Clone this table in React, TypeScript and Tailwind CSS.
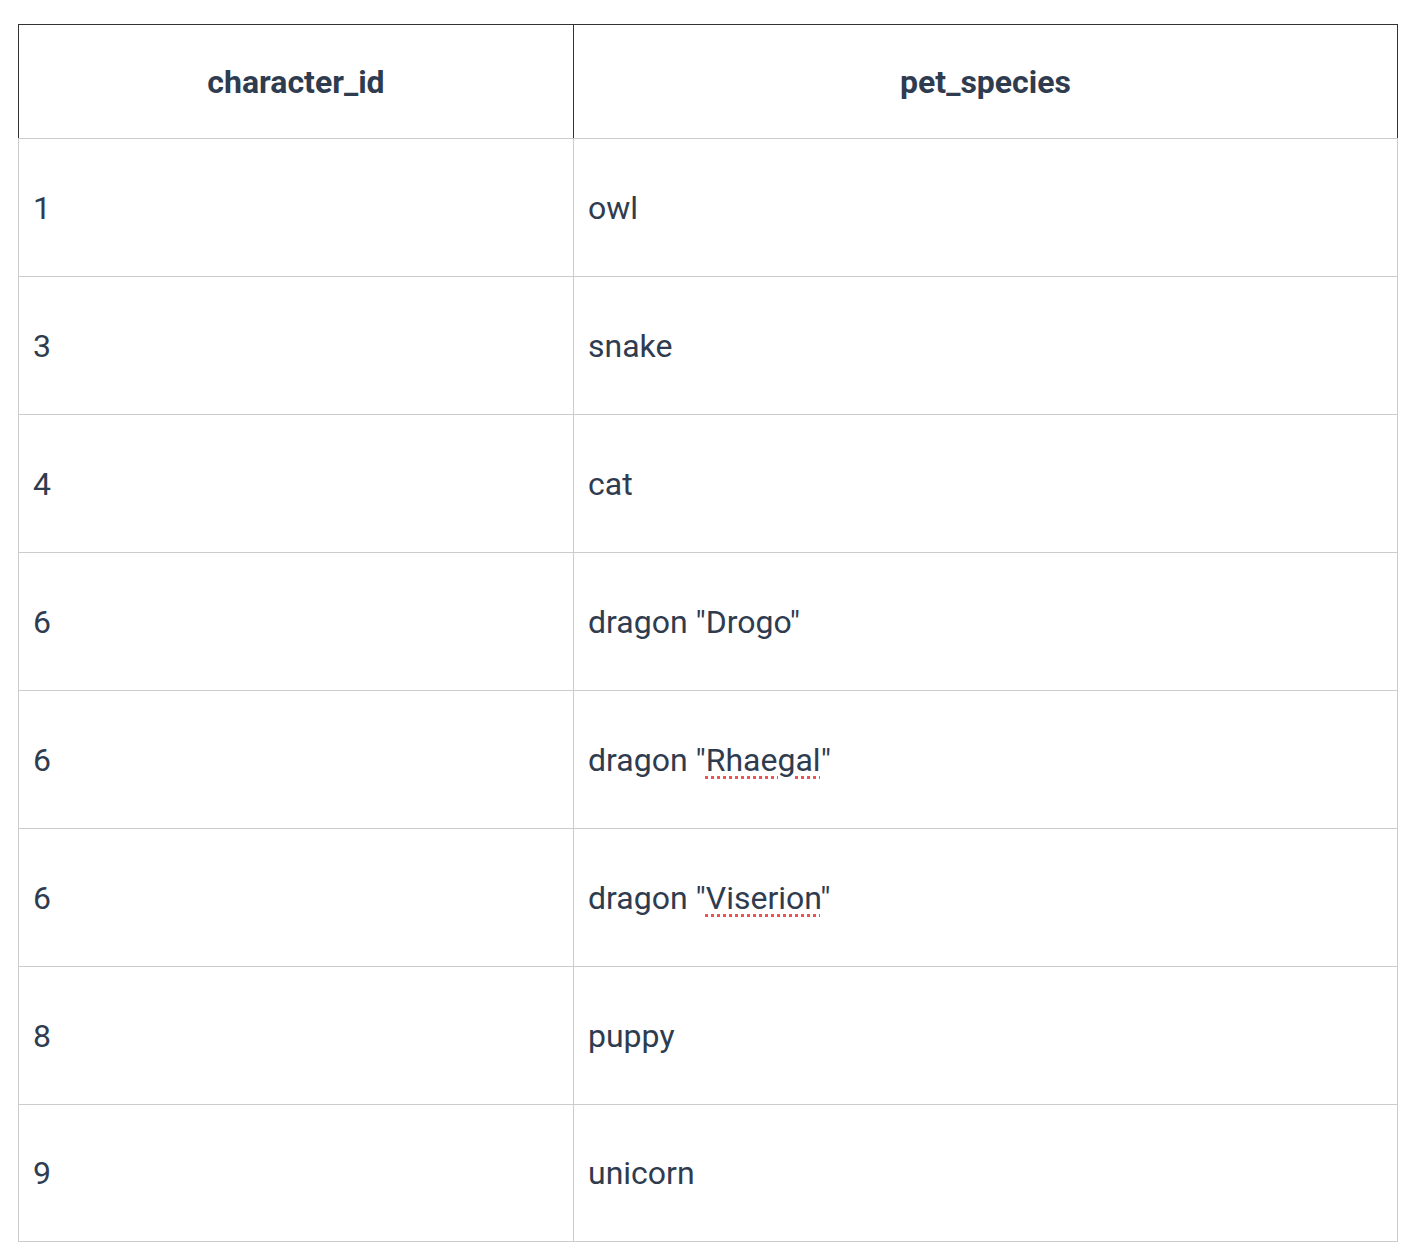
import React from 'react';

// Rows of the pets table
const rows: { id: string; species: string; flagged?: string }[] = [
  { id: '1', species: 'owl' },
  { id: '3', species: 'snake' },
  { id: '4', species: 'cat' },
  { id: '6', species: 'dragon "Drogo"' },
  { id: '6', species: 'dragon "', flagged: 'Rhaegal' },
  { id: '6', species: 'dragon "', flagged: 'Viserion' },
  { id: '8', species: 'puppy' },
  { id: '9', species: 'unicorn' },
];

const App: React.FC = () => {
  return (
    <div className="min-h-screen bg-white pt-[24px] pl-[18px]" style={{ fontFamily: 'Roboto, "Noto Sans", sans-serif' }}>
      <table className="border-separate border-spacing-0 w-[1380px] text-[#2f3c4f] table-fixed">
        <colgroup>
          <col className="w-[555px]" />
          <col />
        </colgroup>
        <thead>
          <tr>
            <th className="h-[114px] border-t-[1.5px] border-l-[1.5px] border-[#333] text-[32px] font-bold text-center align-middle">
              character_id
            </th>
            <th className="h-[114px] border-t-[1.5px] border-l-[1.5px] border-r-[1.5px] border-[#333] text-[32px] font-bold text-center align-middle">
              pet_species
            </th>
          </tr>
        </thead>
        <tbody>
          {rows.map((r, i) => (
            <tr key={i}>
              <td
                className={`h-[138px] border-t border-l border-[#cccccc] px-[14px] text-[32px] align-middle ${
                  i === rows.length - 1 ? 'border-b' : ''
                }`}
              >
                {r.id}
              </td>
              <td
                className={`h-[138px] border-t border-l border-r border-[#cccccc] px-[14px] text-[32px] align-middle ${
                  i === rows.length - 1 ? 'border-b' : ''
                }`}
              >
                {r.species}
                {r.flagged && (
                  <>
                    <span className="underline decoration-dotted decoration-[#f0524f] decoration-[3px] underline-offset-[5px]">
                      {r.flagged}
                    </span>
                    "
                  </>
                )}
              </td>
            </tr>
          ))}
        </tbody>
      </table>
    </div>
  );
};

export default App;
